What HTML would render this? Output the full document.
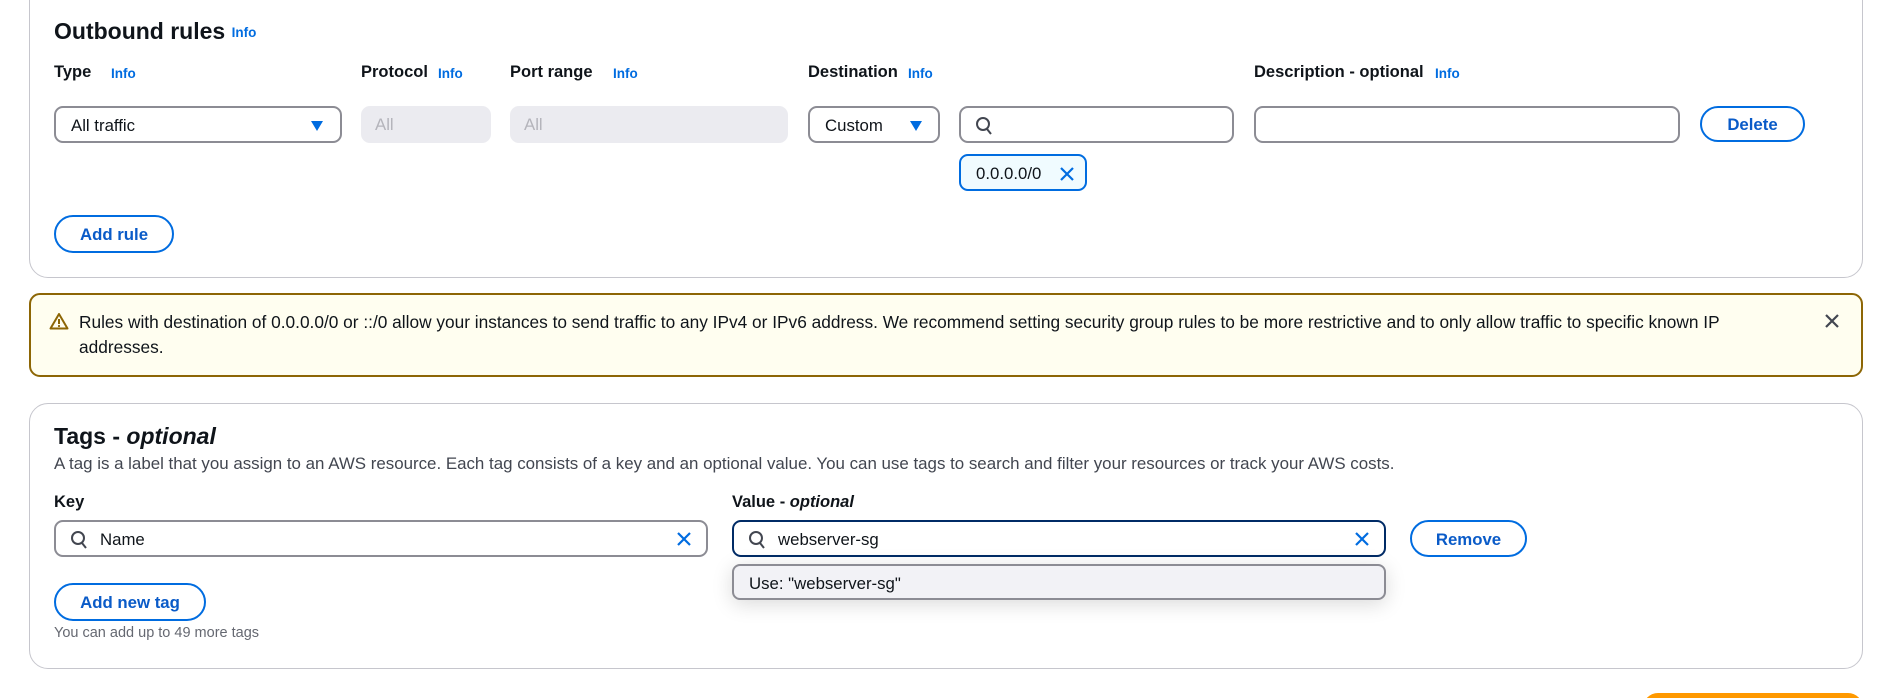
<!DOCTYPE html>
<html><head><meta charset="utf-8"><style>
*{box-sizing:border-box;margin:0;padding:0}
html,body{width:1885px;height:698px;overflow:hidden}
body{background:#fff;position:relative;font-family:"Liberation Sans",Arial,sans-serif;color:#0f141a;font-size:16.8px}
.a{position:absolute}
.card{position:absolute;border:1px solid #c6c6cd;border-radius:19px;background:#fff}
.h{font-weight:bold;font-size:23px}
.lbl{font-weight:bold;font-size:16.5px}
.info{color:#006ce0;font-weight:bold;font-size:13.5px}
.inp{position:absolute;border:2px solid #8c8c94;border-radius:9px;background:#fff;height:37px}
.dis{position:absolute;background:#ebebf0;border-radius:9px;height:37px;color:#b4b4bb;padding:9px 14px}
.btn{position:absolute;border:2px solid #006ce0;border-radius:20px;color:#0a5bc8;font-weight:bold;text-align:center;background:#fff}
.t{position:absolute;top:8px}
</style></head><body>
<div class="card" style="left:29px;top:-20px;width:1834px;height:298px"></div>
<div class="a h" style="left:54px;top:18px">Outbound rules <span class="info" style="vertical-align:2px">Info</span></div>
<div class="a lbl" style="left:54px;top:63px">Type</div><div class="a info" style="left:111px;top:66px">Info</div>
<div class="a lbl" style="left:361px;top:63px">Protocol</div><div class="a info" style="left:438px;top:66px">Info</div>
<div class="a lbl" style="left:510px;top:63px">Port range</div><div class="a info" style="left:613px;top:66px">Info</div>
<div class="a lbl" style="left:808px;top:63px">Destination</div><div class="a info" style="left:908px;top:66px">Info</div>
<div class="a lbl" style="left:1254px;top:63px">Description - optional</div><div class="a info" style="left:1435px;top:66px">Info</div>
<div class="inp" style="left:54px;top:106px;width:288px"><span class="t" style="left:15px">All traffic</span><svg class="a" style="left:254px;top:12px" width="14" height="12"><path d="M1 1h12L7 11z" fill="#006ce0"/></svg></div>
<div class="dis" style="left:361px;top:106px;width:130px">All</div>
<div class="dis" style="left:510px;top:106px;width:278px">All</div>
<div class="inp" style="left:808px;top:106px;width:132px"><span class="t" style="left:15px">Custom</span><svg class="a" style="left:99px;top:12px" width="14" height="12"><path d="M1 1h12L7 11z" fill="#006ce0"/></svg></div>
<div class="inp" style="left:959px;top:106px;width:275px"><svg class="a" style="left:14px;top:8px" width="18" height="20"><circle cx="8" cy="8" r="6" fill="none" stroke="#424650" stroke-width="2"/><path d="M12 13l4 5" stroke="#424650" stroke-width="2"/></svg></div>
<div class="inp" style="left:1254px;top:106px;width:426px"></div>
<div class="btn" style="left:1700px;top:106px;width:105px;height:36px;padding-top:7px">Delete</div>
<div class="a" style="left:959px;top:154px;width:128px;height:37px;border:2px solid #006ce0;border-radius:9px;background:#f0fbff"><span class="t" style="left:15px">0.0.0.0/0</span><svg class="a" style="left:98px;top:10px" width="16" height="16"><path d="M2 2l12 12M14 2L2 14" stroke="#006ce0" stroke-width="2.2"/></svg></div>
<div class="btn" style="left:54px;top:215px;width:120px;height:38px;padding-top:8px">Add rule</div>

<div class="a" style="left:29px;top:293px;width:1834px;height:84px;background:#fffef0;border:2px solid #8d6605;border-radius:11px"></div>
<svg class="a" style="left:49px;top:312px" width="20" height="18"><path d="M10 2L1.5 16.5h17z" fill="none" stroke="#8d6605" stroke-width="2" stroke-linejoin="round"/><path d="M10 7v5" stroke="#8d6605" stroke-width="2"/><circle cx="10" cy="14" r="1.1" fill="#8d6605"/></svg>
<div class="a" style="left:79px;top:310px;width:1700px;line-height:25px;font-size:17.3px">Rules with destination of 0.0.0.0/0 or ::/0 allow your instances to send traffic to any IPv4 or IPv6 address. We recommend setting security group rules to be more restrictive and to only allow traffic to specific known IP addresses.</div>
<svg class="a" style="left:1824px;top:313px" width="16" height="16"><path d="M2 2l12 12M14 2L2 14" stroke="#424650" stroke-width="2.2"/></svg>

<div class="card" style="left:29px;top:403px;width:1834px;height:266px"></div>
<div class="a h" style="left:54px;top:423px">Tags - <i>optional</i></div>
<div class="a" style="left:54px;top:454px;color:#424650;font-size:16.9px">A tag is a label that you assign to an AWS resource. Each tag consists of a key and an optional value. You can use tags to search and filter your resources or track your AWS costs.</div>
<div class="a lbl" style="left:54px;top:493px">Key</div>
<div class="a lbl" style="left:732px;top:493px">Value - <i>optional</i></div>
<div class="inp" style="left:54px;top:520px;width:654px"><svg class="a" style="left:14px;top:8px" width="18" height="20"><circle cx="8" cy="8" r="6" fill="none" stroke="#424650" stroke-width="2"/><path d="M12 13l4 5" stroke="#424650" stroke-width="2"/></svg><span class="t" style="left:44px">Name</span><svg class="a" style="left:620px;top:9px" width="16" height="16"><path d="M2 2l12 12M14 2L2 14" stroke="#006ce0" stroke-width="2.2"/></svg></div>
<div class="inp" style="left:732px;top:520px;width:654px;border-color:#002b66"><svg class="a" style="left:14px;top:8px" width="18" height="20"><circle cx="8" cy="8" r="6" fill="none" stroke="#424650" stroke-width="2"/><path d="M12 13l4 5" stroke="#424650" stroke-width="2"/></svg><span class="t" style="left:44px">webserver-sg</span><svg class="a" style="left:620px;top:9px" width="16" height="16"><path d="M2 2l12 12M14 2L2 14" stroke="#006ce0" stroke-width="2.2"/></svg></div>
<div class="a" style="left:732px;top:564px;width:654px;height:36px;background:#f2f2f6;border:2px solid #8c8c94;border-radius:8px;box-shadow:0 4px 20px rgba(0,0,0,.15)"><span class="t" style="left:15px">Use: "webserver-sg"</span></div>
<div class="btn" style="left:1410px;top:520px;width:117px;height:37px;padding-top:8px">Remove</div>
<div class="btn" style="left:54px;top:583px;width:152px;height:38px;padding-top:8px">Add new tag</div>
<div class="a" style="left:54px;top:625px;color:#656871;font-size:14.5px">You can add up to 49 more tags</div>
<div class="a" style="left:1643px;top:693px;width:220px;height:30px;background:#ff9900;border-radius:20px"></div>
</body></html>
